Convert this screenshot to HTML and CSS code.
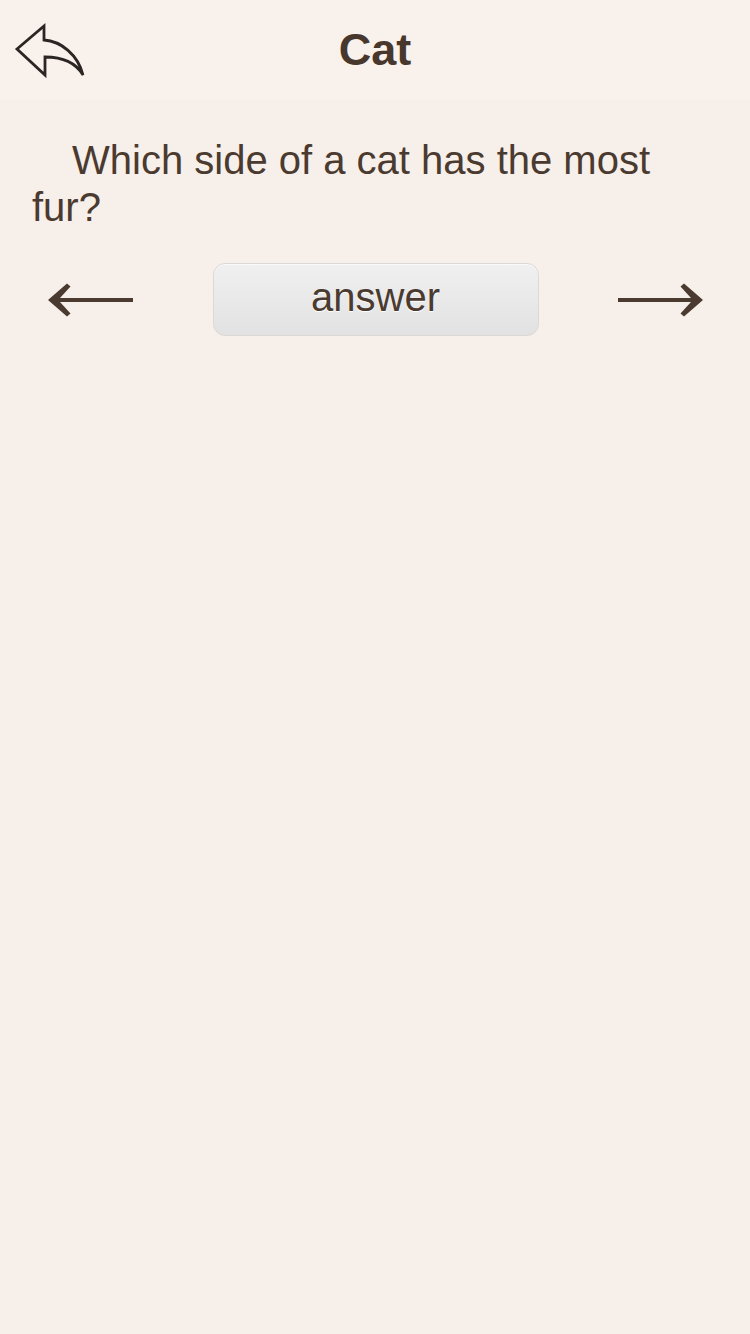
FILE: index.html
```html
<!DOCTYPE html>
<html lang="en">
<head>
<meta charset="utf-8">
<title>Cat</title>
<link rel="stylesheet" href="styles.css">
</head>
<body>
<header class="topbar">
  <a class="back" href="#" aria-label="Back">
    <svg class="back-icon" width="100" height="100" viewBox="0 0 100 100">
      <path d="M17 49 L44 26 L44 40 C61 41 78 55 83 75 C76 63 62 57 45 57 L45 75 Z" fill="none" stroke="#2b2623" stroke-width="2.8" stroke-linejoin="miter"/>
    </svg>
  </a>
  <h1 class="title">Cat</h1>
  <span class="spacer"></span>
</header>
<main class="content">
  <p class="question">Which side of a cat has the most fur?</p>
  <div class="nav">
    <a class="arrow" href="#" aria-label="Previous">
      <svg width="86" height="36" viewBox="0 0 86 36">
        <path d="M0 18 L19 1.5 L22.5 4.5 L12 16 L85 16 L85 20 L12 20 L22.5 31.5 L19 34.5 Z" fill="#4a3a2f"/>
      </svg>
    </a>
    <button class="answer" type="button">answer</button>
    <a class="arrow" href="#" aria-label="Next">
      <svg width="86" height="36" viewBox="0 0 86 36">
        <path d="M86 18 L67 1.5 L63.5 4.5 L74 16 L1 16 L1 20 L74 20 L63.5 31.5 L67 34.5 Z" fill="#4a3a2f"/>
      </svg>
    </a>
  </div>
</main>
</body>
</html>
```
FILE: styles.css
```css
html, body {
  margin: 0;
  padding: 0;
}
body {
  background: #f7efea;
  font-family: "Liberation Sans", Arial, sans-serif;
  color: #4a3a2f;
  min-height: 1334px;
}
.topbar {
  display: grid;
  grid-template-columns: 100px 1fr 100px;
  height: 100px;
  background: #f8f1ec;
}
.back {
  display: block;
  width: 100px;
  height: 100px;
}
.back-icon {
  display: block;
}
.title {
  margin: 0;
  text-align: center;
  font-size: 45px;
  font-weight: bold;
  line-height: 100px;
  color: #47372c;
}
.content {
  padding: 37px 32px 0;
}
.question {
  margin: 0;
  font-size: 40px;
  line-height: 47px;
  text-indent: 40px;
  color: #4a3a2f;
}
.nav {
  display: flex;
  align-items: center;
  justify-content: space-between;
  margin: 32px -32px 0;
  padding: 0 47px 0 48px;
}
.arrow {
  display: block;
  height: 36px;
}
.arrow svg {
  display: block;
}
.answer {
  width: 326px;
  height: 73px;
  margin: 0 auto;
  padding: 0 0 6px;
  border: 1px solid #dcd8d5;
  border-radius: 12px;
  background: linear-gradient(#f0f0f0, #e2e2e2);
  box-shadow: inset 0 1px 0 #fafafa;
  font-family: "Liberation Sans", Arial, sans-serif;
  font-size: 40px;
  line-height: 66px;
  color: #4a3a2f;
  text-shadow: 0 1px 1px #ffffff;
}
```
